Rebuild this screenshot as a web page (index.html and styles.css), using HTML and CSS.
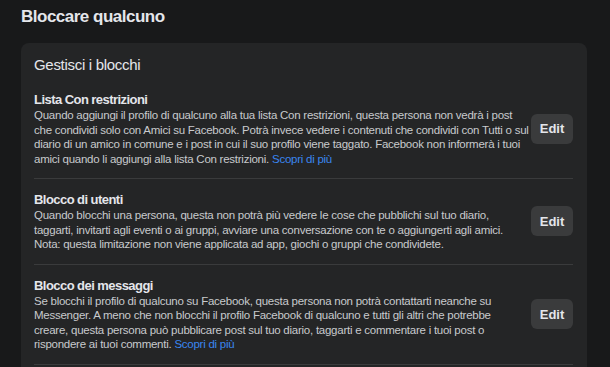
FILE: index.html
```html
<!DOCTYPE html>
<html lang="it">
<head>
    <meta charset="UTF-8">
    <title>Bloccare qualcuno</title>
    <link rel="stylesheet" href="styles.css">
</head>
<body>
    <h1 class="page-title">Bloccare qualcuno</h1>

    <div class="card">
        <h2 class="card-title">Gestisci i blocchi</h2>

        <div class="block-row">
            <div class="block-text">
                <h3>Lista Con restrizioni</h3>
                <p>Quando aggiungi il profilo di qualcuno alla tua lista Con restrizioni, questa persona non vedrà i post che condividi solo con Amici su Facebook. Potrà invece vedere i contenuti che condividi con Tutti o sul diario di un amico in comune e i post in cui il suo profilo viene taggato. Facebook non informerà i tuoi amici quando li aggiungi alla lista Con restrizioni. <a href="#">Scopri di più</a></p>
            </div>
            <button class="edit-button">Edit</button>
        </div>

        <div class="block-row">
            <div class="block-text">
                <h3>Blocco di utenti</h3>
                <p>Quando blocchi una persona, questa non potrà più vedere le cose che pubblichi sul tuo diario, taggarti, invitarti agli eventi o ai gruppi, avviare una conversazione con te o aggiungerti agli amici.<br>Nota: questa limitazione non viene applicata ad app, giochi o gruppi che condividete.</p>
            </div>
            <button class="edit-button">Edit</button>
        </div>

        <div class="block-row">
            <div class="block-text narrow">
                <h3>Blocco dei messaggi</h3>
                <p>Se blocchi il profilo di qualcuno su Facebook, questa persona non potrà contattarti neanche su Messenger. A meno che non blocchi il profilo Facebook di qualcuno e tutti gli altri che potrebbe creare, questa persona può pubblicare post sul tuo diario, taggarti e commentare i tuoi post o rispondere ai tuoi commenti. <a href="#">Scopri di più</a></p>
            </div>
            <button class="edit-button">Edit</button>
        </div>
    </div>
</body>
</html>
```

FILE: styles.css
```css
body {
    margin: 0;
    background: #18191a;
    font-family: "Liberation Sans", Arial, sans-serif;
    color: #e4e6eb;
    height: 367px;
    overflow: hidden;
}

.page-title {
    margin: 0;
    padding: 5px 21px 0;
    font-size: 17px;
    line-height: 24px;
    font-weight: bold;
    letter-spacing: -0.5px;
}

.card {
    margin: 14px 0 0 21px;
    width: 566px;
    box-sizing: border-box;
    background: #242526;
    border-radius: 8px;
    padding: 0 14px 20px 13px;
}

.card-title {
    margin: 0;
    padding: 12px 0 4px;
    font-size: 15px;
    line-height: 20px;
    font-weight: normal;
    letter-spacing: -0.3px;
}

.block-row {
    display: flex;
    align-items: center;
    justify-content: space-between;
    padding: 12px 0;
    border-bottom: 1px solid #3a3b3c;
}

.block-text {
    width: 497px;
}

/* the messages paragraph wraps a bit earlier */
.block-text.narrow {
    width: 490px;
}

.block-text h3 {
    margin: 0;
    font-size: 13px;
    line-height: 17px;
    font-weight: bold;
    letter-spacing: -0.55px;
    color: #e4e6eb;
}

.block-text p {
    margin: 0;
    font-size: 11.5px;
    line-height: 14.5px;
    letter-spacing: -0.25px;
    color: #c8cacd;
}

.block-text a {
    color: #3a85f0;
    text-decoration: none;
}

.edit-button {
    flex-shrink: 0;
    width: 42px;
    height: 30px;
    padding: 0;
    border: none;
    border-radius: 6px;
    background: #3a3b3c;
    color: #e4e6eb;
    font-family: inherit;
    font-size: 13px;
    font-weight: bold;
    cursor: pointer;
}
```
